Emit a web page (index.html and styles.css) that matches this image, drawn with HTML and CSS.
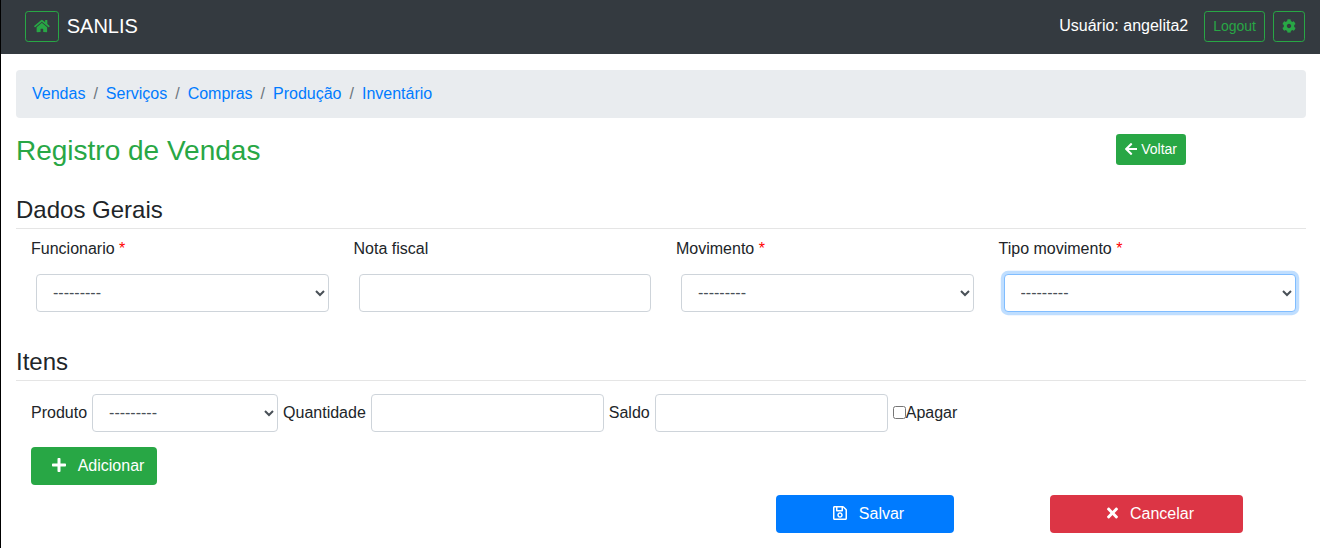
FILE: index.html
```html
<!DOCTYPE html>
<html lang="pt-br">
<head>
<meta charset="utf-8">
<title>SANLIS - Registro de Vendas</title>
<link rel="stylesheet" href="styles.css">
</head>
<body>
<nav class="navbar">
  <a class="btn btn-sm btn-outline home" aria-label="Início"><svg class="icon" viewBox="0 0 576 512" width="15.75" height="14"><path d="M280.37 148.26L96 300.11V464a16 16 0 0 0 16 16l112.06-.29a16 16 0 0 0 15.92-16V368a16 16 0 0 1 16-16h64a16 16 0 0 1 16 16v95.64a16 16 0 0 0 16 16.05L464 480a16 16 0 0 0 16-16V300L295.67 148.26a12.19 12.19 0 0 0-15.3 0zM571.6 251.47L488 182.56V44.05a12 12 0 0 0-12-12h-56a12 12 0 0 0-12 12v72.61L318.47 43a48 48 0 0 0-61 0L4.34 251.47a12 12 0 0 0-1.6 16.9l25.5 31A12 12 0 0 0 45.15 301l235.22-193.74a12.19 12.19 0 0 1 15.3 0L530.9 301a12 12 0 0 0 16.9-1.6l25.5-31a12 12 0 0 0-1.7-16.93z"/></svg></a>
  <span class="brand">SANLIS</span>
  <span class="user">Usuário: angelita2</span>
  <a class="btn btn-sm btn-outline logout">Logout</a>
  <a class="btn btn-sm btn-outline" aria-label="Configurações"><svg class="icon" viewBox="0 0 512 512" width="14" height="14"><path d="M487.4 315.7l-42.6-24.6c4.3-23.2 4.3-47 0-70.2l42.6-24.6c4.9-2.8 7.1-8.6 5.5-14-11.1-35.6-30-67.8-54.7-94.6-3.8-4.1-10-5.1-14.8-2.3L380.8 110c-17.9-15.4-38.5-27.3-60.8-35.1V25.8c0-5.6-3.9-10.5-9.4-11.7-36.7-8.2-74.3-7.8-109.2 0-5.5 1.2-9.4 6.1-9.4 11.7V75c-22.2 7.9-42.8 19.8-60.8 35.1L88.7 85.5c-4.9-2.8-11-1.9-14.8 2.3-24.7 26.7-43.6 58.9-54.7 94.6-1.7 5.4.6 11.2 5.5 14L67.3 221c-4.3 23.2-4.3 47 0 70.2l-42.6 24.6c-4.9 2.8-7.1 8.6-5.5 14 11.1 35.6 30 67.8 54.7 94.6 3.8 4.1 10 5.1 14.8 2.3l42.6-24.6c17.9 15.4 38.5 27.3 60.8 35.1v49.2c0 5.6 3.9 10.5 9.4 11.7 36.7 8.2 74.3 7.8 109.2 0 5.5-1.2 9.4-6.1 9.4-11.7v-49.2c22.2-7.9 42.8-19.8 60.8-35.1l42.6 24.6c4.9 2.8 11 1.9 14.8-2.3 24.7-26.7 43.6-58.9 54.7-94.6 1.5-5.5-.7-11.3-5.6-14.1zM256 336c-44.1 0-80-35.9-80-80s35.9-80 80-80 80 35.9 80 80-35.9 80-80 80z"/></svg></a>
</nav>
<main class="container">
  <ol class="breadcrumb">
    <li><a>Vendas</a></li>
    <li><a>Serviços</a></li>
    <li><a>Compras</a></li>
    <li><a>Produção</a></li>
    <li><a>Inventário</a></li>
  </ol>
  <header class="page-head">
    <h3 class="title">Registro de Vendas</h3>
    <a class="btn btn-sm btn-success"><svg class="icon" viewBox="0 0 448 512" width="12.25" height="14"><path d="M257.5 445.1l-22.2 22.2c-9.4 9.4-24.6 9.4-33.9 0L7 273c-9.4-9.4-9.4-24.6 0-33.9L201.4 44.7c9.4-9.4 24.6-9.4 33.9 0l22.2 22.2c9.5 9.5 9.3 25-.4 34.3L136.6 216H424c13.3 0 24 10.7 24 24v32c0 13.3-10.7 24-24 24H136.6l120.5 114.8c9.8 9.3 10 24.8.4 34.3z"/></svg><span class="back-text">Voltar</span></a>
  </header>
  <form>
    <h4 class="section-title">Dados Gerais</h4>
    <div class="fields">
      <div class="field">
        <label for="funcionario">Funcionario <span class="required">*</span></label>
        <select class="control" id="funcionario"><option>---------</option></select>
      </div>
      <div class="field">
        <label for="nota">Nota fiscal</label>
        <input class="control" id="nota" type="text">
      </div>
      <div class="field">
        <label for="movimento">Movimento <span class="required">*</span></label>
        <select class="control" id="movimento"><option>---------</option></select>
      </div>
      <div class="field">
        <label for="tipo">Tipo movimento <span class="required">*</span></label>
        <select class="control focused" id="tipo"><option>---------</option></select>
      </div>
    </div>
    <h4 class="section-title">Itens</h4>
    <div class="item-row">
      <label for="produto">Produto</label>
      <select class="control product" id="produto"><option>---------</option></select>
      <label for="quantidade">Quantidade</label>
      <input class="control amount" id="quantidade" type="text">
      <label for="saldo">Saldo</label>
      <input class="control amount" id="saldo" type="text">
      <label class="remove"><input class="check" type="checkbox">Apagar</label>
    </div>
    <a class="btn btn-success add"><svg class="icon" viewBox="0 0 448 512" width="14" height="16"><path d="M416 208H272V64c0-17.67-14.33-32-32-32h-32c-17.67 0-32 14.33-32 32v144H32c-17.67 0-32 14.33-32 32v32c0 17.67 14.33 32 32 32h144v144c0 17.67 14.33 32 32 32h32c17.67 0 32-14.33 32-32V304h144c17.67 0 32-14.33 32-32v-32c0-17.67-14.33-32-32-32z"/></svg><span>Adicionar</span></a>
    <div class="actions">
      <a class="btn btn-primary save"><svg class="icon" viewBox="0 0 448 512" width="14" height="16"><path d="M433.941 129.941l-83.882-83.882A48 48 0 0 0 316.118 32H48C21.49 32 0 53.49 0 80v352c0 26.51 21.49 48 48 48h352c26.51 0 48-21.49 48-48V163.882a48 48 0 0 0-14.059-33.941zM272 80v80H144V80h128zm122 352H54a6 6 0 0 1-6-6V86a6 6 0 0 1 6-6h42v104c0 13.255 10.745 24 24 24h176c13.255 0 24-10.745 24-24V83.882l78.243 78.243a6 6 0 0 1 1.757 4.243V426a6 6 0 0 1-6 6zM224 232c-48.523 0-88 39.477-88 88s39.477 88 88 88 88-39.477 88-88-39.477-88-88-88zm0 128c-22.056 0-40-17.944-40-40s17.944-40 40-40 40 17.944 40 40-17.944 40-40 40z"/></svg><span>Salvar</span></a>
      <a class="btn btn-danger cancel"><svg class="icon" viewBox="0 0 352 512" width="11" height="16"><path d="M242.72 256l100.07-100.07c12.28-12.28 12.28-32.19 0-44.48l-22.24-22.24c-12.28-12.28-32.19-12.28-44.48 0L176 189.28 75.93 89.21c-12.28-12.28-32.19-12.28-44.48 0L9.21 111.45c-12.28 12.28-12.28 32.19 0 44.48L109.28 256 9.21 356.07c-12.28 12.28-12.28 32.19 0 44.48l22.24 22.24c12.28 12.28 32.2 12.28 44.48 0L176 322.72l100.07 100.07c12.28 12.28 32.2 12.28 44.48 0l22.24-22.24c12.28-12.28 12.28-32.19 0-44.48L242.72 256z"/></svg><span>Cancelar</span></a>
    </div>
  </form>
</main>
</body>
</html>
```

FILE: styles.css
```css
*, *::before, *::after { box-sizing: border-box; }

html { overflow: hidden; background: #fff; }

body {
  margin: 0;
  width: 1321px;
  height: 548px;
  border-left: 1px solid #000;
  font: 400 16px/1.5 "Liberation Sans", Arial, sans-serif;
  color: #212529;
}

.icon { display: block; margin-bottom: 2px; fill: currentColor; flex: none; }

.btn {
  display: inline-flex;
  align-items: center;
  justify-content: center;
  height: 38px;
  border: 1px solid transparent;
  border-radius: 4px;
  padding: 0 12px;
  color: #fff;
}
.btn-sm { height: 31px; padding: 0 8px; border-radius: 3.2px; font-size: 14px; }
.btn-outline { color: #28a745; border-color: #28a745; }
.btn-success { background: #28a745; }
.btn-primary { background: #007bff; }
.btn-danger { background: #dc3545; }

.navbar {
  display: flex;
  align-items: center;
  height: 54px;
  padding: 0 16px 1px 24px;
  background: #343a40;
}
.brand { margin-left: 8px; padding-bottom: 2px; font-size: 20px; line-height: 30px; color: #fff; }
.user { margin-left: auto; margin-right: 16px; padding-bottom: 2px; color: #fff; }
.logout { margin-right: 8px; }

.container { padding: 16px 15px 0; }

.breadcrumb {
  display: flex;
  margin: 0 0 16px;
  padding: 12px 16px;
  border-radius: 4px;
  background: #e9ecef;
  list-style: none;
  color: #007bff;
}
.breadcrumb li + li { padding-left: 8px; }
.breadcrumb li + li::before { content: "/"; padding-right: 8px; color: #6c757d; }

.page-head {
  display: flex;
  justify-content: space-between;
  align-items: flex-start;
  height: 61px;
  padding-right: 120px;
}
.title { margin: 0; font-size: 28px; font-weight: 400; line-height: 33.6px; color: #28a745; }
.back-text { margin-left: 4px; }

.section-title {
  height: 34px;
  margin: 0;
  padding-top: 1px;
  border-bottom: 1px solid #e5e5e5;
  font-size: 24px;
  font-weight: 400;
  line-height: 28.8px;
}

.fields { display: grid; grid-template-columns: repeat(4, 1fr); height: 118px; padding-top: 8px; }
.field { padding: 0 15px; }
.field label { display: block; margin-bottom: 13px; }
.required { color: red; }

.control {
  height: 38px;
  border: 1px solid #ced4da;
  border-radius: 4px;
  padding: 5px 12px 7px;
  background: #fff;
  font: inherit;
  color: #495057;
}
.field .control { display: block; width: 100%; margin: 0 0 0 5px; }
.focused { border-color: #80bdff; box-shadow: 0 0 0 3.2px rgba(0, 123, 255, .25); }

.item-row { display: flex; align-items: center; gap: 5px; padding: 13px 15px 15px; }
.product { width: 186px; }
.amount { width: 233px; }
.remove { display: flex; align-items: center; }
.check { width: 13px; height: 13px; margin: 0; }
.item-row label { margin-top: -1px; }

.add { display: flex; width: 126px; margin-left: 15px; padding-left: 20px; gap: 12px; }

.actions { display: flex; gap: 96px; margin-top: 10px; padding-left: 760px; }
.actions .btn { gap: 12px; }
.save { width: 178px; padding-left: 19px; }
.cancel { width: 193px; padding-left: 20px; }
```
